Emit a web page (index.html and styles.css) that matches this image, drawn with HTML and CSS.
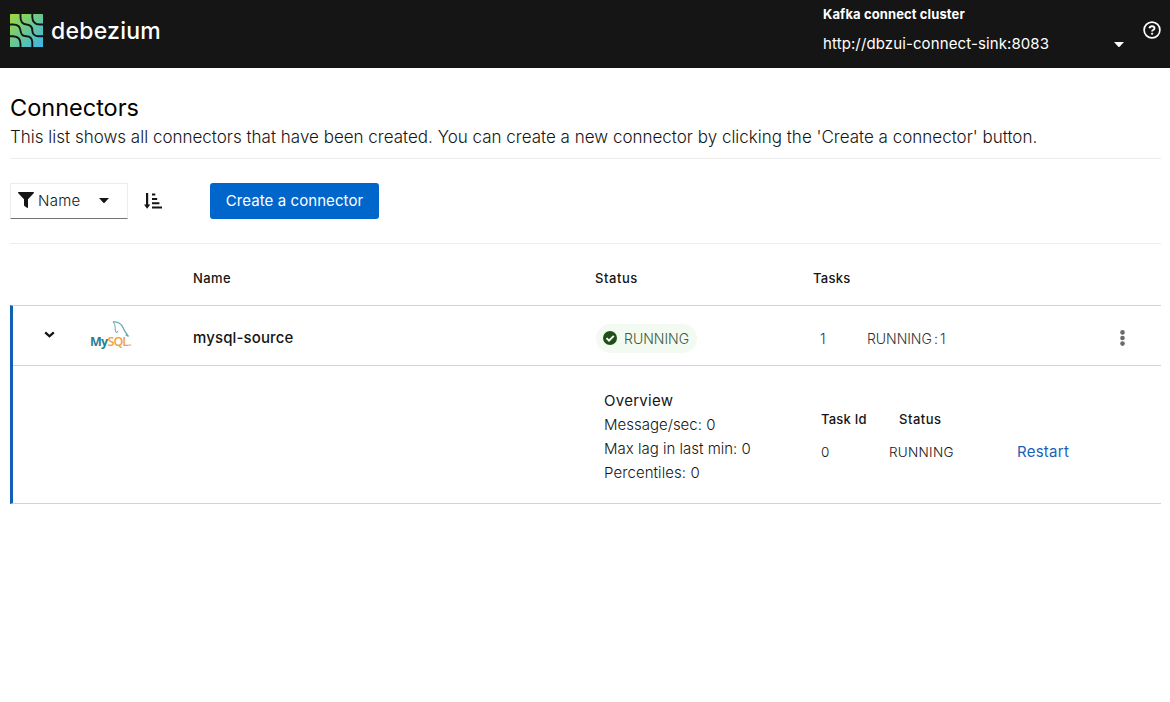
FILE: index.html
```
<!DOCTYPE html>
<html lang="en">
<head>
<meta charset="utf-8">
<title>Debezium connectors</title>
<link rel="stylesheet" href="styles.css">
</head>
<body>
<header class="masthead">
  <div class="brand">
    <svg class="brand-mark" viewBox="0 0 33 33">
      <defs>
        <linearGradient id="mark" gradientUnits="userSpaceOnUse" x1="0" y1="0" x2="33" y2="33"><stop offset="0" stop-color="#a0da38"/><stop offset=".5" stop-color="#69c693"/><stop offset="1" stop-color="#3eb5ea"/></linearGradient>
      </defs>
      <rect width="33" height="33" rx=".6" fill="url(#mark)"/>
      <g fill="none" stroke="#151515" stroke-width="1.900">
        <path d="M-1 10.500H3Q10 10.500 10.500 16.500Q11 22.300 16.500 22.300Q21.800 22.500 22.300 28V34"/>
        <path d="M10.500 -1V3Q10.500 10 16.500 10.500Q22.300 11 22.300 16.500Q22.500 21.800 28 22.300H34"/>
        <path d="M22.300 -1V3Q22.500 10.500 30 10.500H34"/>
        <path d="M-1 22.300H3Q10.500 22.500 10.500 30V34"/>
      </g>
    </svg>
    <span class="brand-name">debezium</span>
  </div>
  <div class="cluster">
    <div class="cluster-label">Kafka connect cluster</div>
    <div class="cluster-select"><span>http://dbzui-connect-sink:8083</span>
      <svg class="caret" viewBox="0 0 10 5"><path d="M0 0H10L5.600 4.700Q5 5.200 4.400 4.700Z" fill="currentColor"/></svg>
    </div>
  </div>
  <svg class="help" viewBox="0 0 18 18" fill="none" stroke="#fff"><circle cx="9" cy="9" r="7.900" stroke-width="1.700"/><path d="M6.400 7.200Q6.900 5.200 9 5.200Q11.500 5.200 11.500 7.200Q11.500 8.300 10.200 9Q9.100 9.600 9.100 10.500" stroke-width="1.900"/><circle cx="9.100" cy="12.700" r=".7" fill="#fff" stroke-width=".9"/></svg>
</header>
<main class="page">
  <section class="intro">
    <h1 class="title">Connectors</h1>
    <p class="lead">This list shows all connectors that have been created. You can create a new connector by clicking the 'Create a connector' button.</p>
  </section>
  <section class="toolbar">
    <button class="filter">
      <svg class="funnel" viewBox="0 0 16 16"><path d="M.8 0H15.200Q16.500 .2 15.700 1.300L10 7.200V15.200Q9.900 16.300 8.900 15.800L6.500 14Q6 13.600 6 13V7.200L.3 1.300Q-.5 .2 .8 0Z" fill="#151515"/></svg>
      <span class="filter-text">Name</span>
      <svg class="caret" viewBox="0 0 10 5"><path d="M0 0H10L5.600 4.700Q5 5.200 4.400 4.700Z" fill="currentColor"/></svg>
    </button>
    <svg class="sort" viewBox="0 0 18 16"><path d="M2 0H4.200V11.500H6.300L3.100 15.800L0 11.500H2ZM8 .5H11.300V2.600H8ZM8 4.900H13.200V7H8ZM8 9.200H15.400V11.300H8ZM8 13.500H18V15.600H8Z" fill="#151515"/></svg>
    <button class="create">Create a connector</button>
  </section>
  <section class="table">
    <div class="row head">
      <span class="c-name">Name</span><span class="c-status head-status">Status</span><span class="c-tasks head-tasks">Tasks</span>
    </div>
    <div class="item">
      <div class="row main">
        <svg class="chevron" viewBox="0 0 11 7"><path d="M1.200 1.300L5.500 5.300L9.800 1.300" fill="none" stroke="#151515" stroke-width="2.300"/></svg>
        <div class="mysql">
          <svg class="dolphin" viewBox="0 0 18 17" fill="none" stroke="#6aaab8" stroke-width="1"><path d="M1 .8Q7.500 .5 10.300 5.200Q12.500 10.500 16.500 15.500L13.600 13.800" stroke-width="1.300"/><path d="M1 .8Q3 3 3.200 6Q2.500 9 4.500 12L6 9.800"/></svg>
          <span class="mysql-text"><span class="my">My</span><span class="sql">SQL</span><span class="mark">.</span></span>
        </div>
        <span class="c-name name">mysql-source</span>
        <span class="c-status"><span class="badge"><svg class="check" viewBox="0 0 14 14"><circle cx="7" cy="7" r="7" fill="#1e4f18"/><path d="M3.500 7.200L6 9.700L10.800 4.900" fill="none" stroke="#fff" stroke-width="1.900"/></svg><span class="badge-text">RUNNING</span></span></span>
        <span class="c-tasks counts"><span class="count">1</span><span class="state">RUNNING : 1</span></span>
        <svg class="kebab" viewBox="0 0 5 16" fill="#6a6a6a"><circle cx="2.500" cy="2.400" r="2.300"/><circle cx="2.500" cy="8" r="2.300"/><circle cx="2.500" cy="13.600" r="2.300"/></svg>
      </div>
      <div class="detail">
        <div class="overview">
          <div class="overview-title">Overview</div>
          <div>Message/sec: 0</div>
          <div>Max lag in last min: 0</div>
          <div class="percentiles">Percentiles: 0</div>
        </div>
        <div class="tasks">
          <span class="task-head">Task Id</span><span class="task-head task-head-status">Status</span><span></span>
          <span class="task-id">0</span><span class="task-state">RUNNING</span><a class="restart">Restart</a>
        </div>
      </div>
    </div>
  </section>
</main>
</body>
</html>
```
FILE: styles.css
```
* { box-sizing: border-box; }
body { margin: 0; background: #fff; color: #151515; font-family: Inter, "Liberation Sans", sans-serif; font-size: 15px; font-weight: 300; }
svg { display: block; flex: none; }
span { white-space: nowrap; }
button { font: inherit; border: 0; padding: 0; }

.masthead { height: 68px; background: #151515; color: #fff; display: flex; }
.brand { width: 823px; padding: 14px 0 0 10px; display: flex; }
.brand-mark { width: 33px; height: 33px; }
.brand-name { margin-left: 8px; font-size: 23px; line-height: 35px; font-weight: 500; letter-spacing: .25px; }
.cluster { width: 301px; padding-top: 4px; }
.cluster-label { font-size: 13px; line-height: 21px; font-weight: 700; letter-spacing: .11px; }
.cluster-select { font-weight: 400; line-height: 24px; margin-top: 7px; letter-spacing: .11px; display: flex; align-items: center; justify-content: space-between; }
.caret { width: 10px; height: 5px; }
.help { width: 18px; height: 18px; margin: 21px 0 0 19px; }

.page { padding: 0 9px 0 10px; }
.intro { height: 91px; padding-top: 24px; border-bottom: 1px solid #ededed; }
.title { margin: 0; font-size: 23.5px; line-height: 31px; font-weight: 400; color: #000; }
.lead { margin: 0; font-size: 17px; line-height: 28px; white-space: nowrap; }

.toolbar { height: 85px; padding-top: 24px; border-bottom: 1px solid #ededed; display: flex; }
.filter { width: 118px; height: 36px; background: #fff; border: 1px solid #ededed; border-bottom-color: #72767b; display: flex; align-items: center; padding: 0 18px 0 7px; color: #151515; }
.funnel { width: 16px; height: 16px; margin-top: -2px; }
.filter-text { margin-left: 4px; padding-bottom: 1px; flex: 1; text-align: left; letter-spacing: .25px; }
.filter .caret { margin-top: -1px; }
.sort { width: 18px; height: 16px; margin: 10px 48px 0 16px; }
.create { width: 169px; height: 36px; padding-bottom: 2px; background: #06c; color: #fff; border-radius: 3px; font-weight: 400; letter-spacing: .08px; }

.row { display: grid; grid-template-columns: 77px 103px 402px 218px 1fr; align-items: center; padding-left: 3px; }
.head { height: 61px; padding-top: 7px; font-size: 13px; font-weight: 500; letter-spacing: .4px; }
.head-status { letter-spacing: .55px; }
.head-tasks { letter-spacing: .25px; }
.c-name { grid-column: 3; }
.c-status { grid-column: 4; }
.c-tasks { grid-column: 5; }

.item { border-left: 3px solid #1060b8; border-top: 1px solid #d2d2d2; border-bottom: 1px solid #d2d2d2; height: 199px; }
.main { height: 60px; border-bottom: 1px solid #d2d2d2; padding: 4px 0 0; grid-template-columns: 77px 103px 403px 217px 310px 1fr; }
.chevron { width: 11px; height: 7px; margin: -7px 0 0 31px; }
.mysql { width: 42px; height: 30px; margin-top: -6px; display: grid; }
.dolphin { grid-area: 1 / 1; width: 18px; height: 17px; margin: 1px 0 0 22px; }
.mysql-text { grid-area: 1 / 1; align-self: end; font: 700 12.5px/17px "Open Sans", sans-serif; letter-spacing: -.75px; }
.my { color: #2d7d93; }
.sql { color: #f2a03d; font-weight: 600; letter-spacing: -.9px; }
.mark { color: #f5c48a; }
.name { font-weight: 500; letter-spacing: .13px; }
.badge { display: inline-flex; align-items: center; height: 29px; width: 101px; margin-top: 1px; border-radius: 15px; background: #f3faf2; padding-left: 7px; }
.check { width: 14px; height: 14px; margin-right: 7px; }
.badge-text, .counts { font-size: 14px; }
.badge-text { color: #3d5a3a; }
.counts { color: #333; display: flex; padding: 2px 0 0 7px; }
.count { width: 47px; }
.state { letter-spacing: -.05px; word-spacing: -1.8px; }
.kebab { width: 5px; height: 16px; margin-left: -3px; }

.detail { display: flex; padding: 23px 0 0 591px; }
.overview { width: 217px; line-height: 24px; }
.overview-title { font-weight: 400; letter-spacing: .27px; }
.percentiles { letter-spacing: .08px; }
.tasks { display: grid; grid-template-columns: 68px 128px 60px; grid-template-rows: 32px 33px; align-items: center; padding-top: 14px; font-size: 13.5px; align-content: start; }
.task-head { font-size: 13px; font-weight: 500; letter-spacing: .22px; }
.task-head-status { padding-left: 10px; letter-spacing: .5px; }
.task-state { letter-spacing: .28px; }
.restart { font-size: 15px; color: #1c5fb8; font-weight: 400; letter-spacing: .25px; }
```
